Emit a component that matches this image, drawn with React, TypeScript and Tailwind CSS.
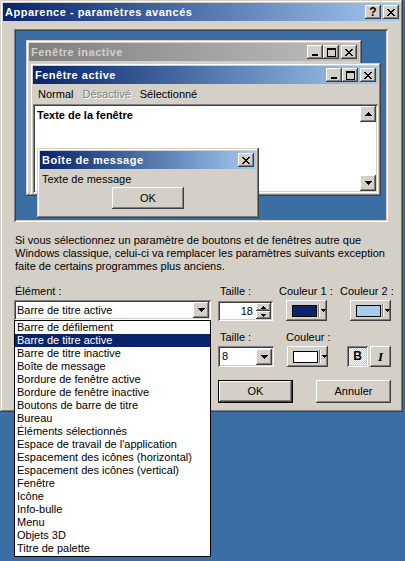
import React from 'react'

const FRAME = 'shadow-[inset_-1px_-1px_#404040,inset_1px_1px_#d4d0c8,inset_-2px_-2px_#808080,inset_2px_2px_#fff]'
const RAISED = 'shadow-[inset_-1px_-1px_#404040,inset_1px_1px_#fff,inset_-2px_-2px_#808080]'
const SUNKEN = 'shadow-[inset_1px_1px_#808080,inset_-1px_-1px_#fff,inset_2px_2px_#404040,inset_-2px_-2px_#d4d0c8]'
const DEFAULT_BTN = 'shadow-[inset_0_0_0_1px_#000,inset_-2px_-2px_#404040,inset_2px_2px_#fff,inset_-3px_-3px_#808080]'

const X_GLYPH = ['xx....xx', '.xx..xx.', '..xxxx..', '...xx...', '..xxxx..', '.xx..xx.', 'xx....xx']
const MIN_GLYPH = ['........', '........', '........', '........', '........', '........', '.xxxxxx.', '.xxxxxx.']
const MAX_GLYPH = [
  'xxxxxxxxx',
  'xxxxxxxxx',
  'x.......x',
  'x.......x',
  'x.......x',
  'x.......x',
  'x.......x',
  'x.......x',
  'xxxxxxxxx',
]
const DOWN = ['xxxxxxx', '.xxxxx.', '..xxx..', '...x...']
const UP = [...DOWN].reverse()
const SMALL_DOWN = ['xxxxx', '.xxx.', '..x..']
const SMALL_UP = [...SMALL_DOWN].reverse()

// pixel glyph drawn from a tiny bitmap
function Pix({ rows, color = '#000' }: { rows: string[]; color?: string }) {
  const w = rows[0].length
  const h = rows.length
  return (
    <svg width={w} height={h} viewBox={`0 0 ${w} ${h}`} shapeRendering="crispEdges" className="block">
      {rows.flatMap((r, y) =>
        r.split('').map((c, x) =>
          c === 'x' ? <rect key={`${x}-${y}`} x={x} y={y} width={1} height={1} fill={color} /> : null
        )
      )}
    </svg>
  )
}

function CapBtn({ children }: { children: React.ReactNode }) {
  return (
    <div className={`w-[16px] h-[14px] bg-[#d4d0c8] ${RAISED} flex items-center justify-center`}>{children}</div>
  )
}

function CapButtons() {
  return (
    <div className="flex items-center">
      <CapBtn><Pix rows={MIN_GLYPH} /></CapBtn>
      <CapBtn><Pix rows={MAX_GLYPH} /></CapBtn>
      <div className="w-[2px]" />
      <CapBtn><Pix rows={X_GLYPH} /></CapBtn>
    </div>
  )
}

function DropBtn() {
  return (
    <div className={`w-[16px] h-[16px] bg-[#d4d0c8] ${RAISED} flex items-center justify-center`}>
      <Pix rows={DOWN} />
    </div>
  )
}

function ColorBtn({ color }: { color: string }) {
  return (
    <div className={`w-[41px] h-[21px] bg-[#d4d0c8] ${RAISED} flex items-center pl-[6px]`}>
      <div className="w-[25px] h-[12px] border border-black" style={{ background: color }} />
      <div className="ml-[1px] w-[1px] h-[13px] bg-[#808080]" />
      <div className="w-[1px] h-[13px] bg-white" />
      <div className="ml-[1px]"><Pix rows={SMALL_DOWN} /></div>
    </div>
  )
}

const ITEMS = [
  'Barre de défilement',
  'Barre de titre active',
  'Barre de titre inactive',
  'Boîte de message',
  'Bordure de fenêtre active',
  'Bordure de fenêtre inactive',
  'Boutons de barre de titre',
  'Bureau',
  'Éléments sélectionnés',
  "Espace de travail de l'application",
  'Espacement des icônes (horizontal)',
  'Espacement des icônes (vertical)',
  'Fenêtre',
  'Icône',
  'Info-bulle',
  'Menu',
  'Objets 3D',
  'Titre de palette',
]

function Preview() {
  return (
    <div className={`relative ml-[11px] mt-[8px] w-[374px] h-[193px] bg-[#3a6ea5] ${SUNKEN}`}>
      {/* inactive window */}
      <div className={`absolute left-[12px] top-[11px] w-[336px] h-[156px] bg-[#d4d0c8] ${FRAME} p-[3px]`}>
        <div className="h-[18px] bg-gradient-to-r from-[#808080] to-[#c0c0c0] flex items-center justify-between pl-[2px] pr-[2px]">
          <span className="font-bold text-[#d4d0c8] tracking-[0.5px]">Fenêtre inactive</span>
          <CapButtons />
        </div>
      </div>

      {/* active window */}
      <div className={`absolute left-[16px] top-[34px] w-[351px] h-[133px] bg-[#d4d0c8] ${FRAME} p-[3px] flex flex-col`}>
        <div className="h-[18px] shrink-0 bg-gradient-to-r from-[#0a246a] to-[#a6caf0] flex items-center justify-between pl-[2px] pr-[2px]">
          <span className="font-bold text-white tracking-[0.5px]">Fenêtre active</span>
          <CapButtons />
        </div>
        <div className="h-[20px] shrink-0 flex items-center pl-[5px] gap-[9px]">
          <span>Normal</span>
          <span className="text-[#808080] [text-shadow:1px_1px_#fff]">Désactivé</span>
          <span>Sélectionné</span>
        </div>
        <div className={`flex-1 bg-white ${SUNKEN} p-[2px] flex`}>
          <div className="flex-1 pl-[2px] pt-[3px] font-bold">Texte de la fenêtre</div>
          <div className="w-[16px] flex flex-col justify-between">
            <div className={`h-[16px] bg-[#d4d0c8] ${RAISED} flex items-center justify-center`}>
              <Pix rows={UP} />
            </div>
            <div className={`h-[16px] bg-[#d4d0c8] ${RAISED} flex items-center justify-center`}>
              <Pix rows={DOWN} />
            </div>
          </div>
        </div>
      </div>

      {/* message box */}
      <div className={`absolute left-[23px] top-[119px] w-[222px] h-[70px] bg-[#d4d0c8] ${FRAME} p-[3px] flex flex-col`}>
        <div className="h-[18px] shrink-0 bg-gradient-to-r from-[#0a246a] to-[#a6caf0] flex items-center justify-between pl-[2px] pr-[2px]">
          <span className="font-bold text-white tracking-[0.5px]">Boîte de message</span>
          <CapBtn><Pix rows={X_GLYPH} /></CapBtn>
        </div>
        <div className="mt-[4px] pl-[2px] leading-[13px]">Texte de message</div>
        <div className="mt-[1px] flex justify-center">
          <div className={`w-[72px] h-[22px] ${RAISED} flex items-center justify-center`}>OK</div>
        </div>
      </div>
    </div>
  )
}

export default function App() {
  return (
    <div className="w-[405px] h-[561px] bg-[#3a6ea5] overflow-hidden font-['Liberation_Sans',Arial,sans-serif] text-[11px] text-black leading-[13px]">
      <div className={`relative w-[403px] h-[412px] bg-[#d4d0c8] ${FRAME} p-[3px] flex flex-col`}>
        {/* title bar */}
        <div className="h-[18px] shrink-0 bg-gradient-to-r from-[#0a246a] to-[#a6caf0] flex items-center justify-between pl-[2px] pr-[1px]">
          <span className="font-bold text-white tracking-[0.5px]">Apparence - paramètres avancés</span>
          <div className="flex items-center gap-[2px]">
            <CapBtn><span className="font-bold text-[12px] leading-none">?</span></CapBtn>
            <CapBtn><Pix rows={X_GLYPH} /></CapBtn>
          </div>
        </div>

        <Preview />

        <p className="mt-[12px] ml-[12px]">
          Si vous sélectionnez un paramètre de boutons et de fenêtres autre que
          <br />
          Windows classique, celui-ci va remplacer les paramètres suivants exception
          <br />
          faite de certains programmes plus anciens.
        </p>

        <div className="flex ml-[11px] mt-[12px]">
          {/* element column */}
          <div className="w-[197px] relative">
            <div className="pl-[1px]">Élément :</div>
            <div className={`mt-[2px] h-[20px] bg-white ${SUNKEN} p-[2px] flex items-center`}>
              <span className="flex-1 pl-[1px]">Barre de titre active</span>
              <DropBtn />
            </div>
            <div className="absolute left-0 top-[35px] w-[197px] h-[237px] bg-white border border-black z-10">
              {ITEMS.map((it) => (
                <div
                  key={it}
                  className={`h-[13px] leading-[13px] pl-[2px] whitespace-nowrap ${
                    it === 'Barre de titre active' ? 'bg-[#0a246a] text-white' : ''
                  }`}
                >
                  {it}
                </div>
              ))}
            </div>
          </div>

          {/* settings */}
          <div className="ml-[7px] flex flex-col">
            <div className="flex">
              <div className="w-[61px]">
                <div className="pl-[2px]">Taille :</div>
                <div className={`mt-[3px] w-[55px] h-[20px] bg-white ${SUNKEN} p-[2px] flex`}>
                  <span className="flex-1 text-right pr-[3px] leading-[16px]">18</span>
                  <div className="w-[15px] flex flex-col">
                    <div className={`h-[8px] bg-[#d4d0c8] ${RAISED} flex items-center justify-center`}>
                      <Pix rows={SMALL_UP} />
                    </div>
                    <div className={`h-[8px] bg-[#d4d0c8] ${RAISED} flex items-center justify-center`}>
                      <Pix rows={SMALL_DOWN} />
                    </div>
                  </div>
                </div>
              </div>
              <div className="w-[61px]">
                <div>Couleur 1 :</div>
                <div className="mt-[2px] ml-[7px]">
                  <ColorBtn color="#0a246a" />
                </div>
              </div>
              <div>
                <div>Couleur 2 :</div>
                <div className="mt-[2px] ml-[10px]">
                  <ColorBtn color="#a6caf0" />
                </div>
              </div>
            </div>

            <div className="flex mt-[10px]">
              <div className="w-[68px]">
                <div className="pl-[2px]">Taille :</div>
                <div className={`mt-[2px] w-[56px] h-[21px] bg-white ${SUNKEN} p-[2px] flex items-center`}>
                  <span className="flex-1 pl-[2px]">8</span>
                  <DropBtn />
                </div>
              </div>
              <div className="w-[61px]">
                <div>Couleur :</div>
                <div className="mt-[2px] ml-[1px]">
                  <ColorBtn color="#ffffff" />
                </div>
              </div>
              <div className="pt-[15px] flex gap-[2px]">
                <div
                  className={`w-[21px] h-[21px] ${SUNKEN} bg-[conic-gradient(#fff_25%,#d4d0c8_0_50%,#fff_0_75%,#d4d0c8_0)] bg-[length:2px_2px] flex items-center justify-center font-bold text-[12px]`}
                >
                  B
                </div>
                <div
                  className={`w-[21px] h-[21px] bg-[#d4d0c8] ${RAISED} flex items-center justify-center italic font-['Liberation_Serif',serif] text-[13px] font-bold`}
                >
                  I
                </div>
              </div>
            </div>

            <div className="flex mt-[13px]">
              <div className={`w-[75px] h-[23px] ${DEFAULT_BTN} flex items-center justify-center`}>OK</div>
              <div className={`ml-[23px] w-[75px] h-[23px] ${RAISED} flex items-center justify-center`}>Annuler</div>
            </div>
          </div>
        </div>
      </div>
    </div>
  )
}
